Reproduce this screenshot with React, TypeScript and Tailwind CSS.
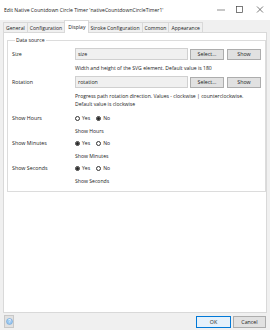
const font = { fontFamily: '"Open Sans", "Noto Sans", sans-serif' };

const Radio = ({ checked, label }: { checked: boolean; label: string }) => (
  <span className="flex items-center gap-[2px]">
    <span className="w-[5px] h-[5px] rounded-full border-[0.5px] border-[#333] flex items-center justify-center bg-white">
      {checked && <span className="w-[3px] h-[3px] rounded-full bg-[#222]" />}
    </span>
    <span>{label}</span>
  </span>
);

const Btn = ({ label, w }: { label: string; w: string }) => (
  <div className={`${w} h-[11px] bg-[#e1e1e1] border border-[#adadad] flex items-center justify-center`}>{label}</div>
);

const tabs = ['General', 'Configuration', 'Display', 'Stroke Configuration', 'Common', 'Appearance'];

export default function App() {
  return (
    <div style={font} className="w-[270px] h-[330px] bg-[#f0f0f0] flex flex-col text-[5.3px] leading-[8px] text-[#222] overflow-hidden">
      {/* title bar */}
      <div className="h-[20px] bg-white flex items-center pl-[4px] shrink-0">
        <span className="flex-1 text-[5.1px] whitespace-nowrap">Edit Native Countdown Circle Timer 'nativeCountdownCircleTimer1'</span>
        <svg width="48" height="10" viewBox="0 0 48 10" className="mr-[5px]">
          <line x1="0" y1="5" x2="8" y2="5" stroke="#444" strokeWidth="0.6" />
          <rect x="19.5" y="1.5" width="6" height="6" fill="none" stroke="#444" strokeWidth="0.7" />
          <path d="M40 1.5 L46 7.5 M46 1.5 L40 7.5" stroke="#444" strokeWidth="0.7" />
        </svg>
      </div>

      {/* tabs */}
      <div className="flex items-end pl-[3px] h-[13px] shrink-0 text-[5.1px]">
        {tabs.map((t) =>
          t === 'Display' ? (
            <div key={t} className="h-[13px] px-[3px] bg-white border border-b-0 border-[#d9d9d9] -mx-[1px] relative z-10 flex items-center">
              {t}
            </div>
          ) : (
            <div key={t} className="h-[11px] px-[2px] bg-[#f0f0f0] border border-b-0 border-[#d9d9d9] -ml-[1px] first:ml-0 flex items-center">
              {t}
            </div>
          )
        )}
      </div>

      {/* panel */}
      <div className="mx-[3px] flex-1 bg-white border border-[#d9d9d9] -mt-[1px] pt-[3px] px-[3px]">
        <fieldset className="border border-[#dcdcdc] px-[4px] pb-[4px]">
          <legend className="ml-[3px] px-[1px] text-[5.1px]">Data source</legend>
          <div className="flex flex-col">
            <div className="flex h-[12px] items-center mt-[4px]">
              <span className="w-[63px]">Size</span>
              <div className="w-[113px] h-[12px] bg-[#f0f0f0] border border-[#d0d0d0] flex items-center pl-[2px]">size</div>
              <div className="flex ml-[2px] gap-[3px]">
                <Btn label="Select..." w="w-[34px]" />
                <Btn label="Show" w="w-[34px]" />
              </div>
            </div>
            <div className="h-[16px] flex items-center pl-[63px] text-[5.1px] whitespace-nowrap">Width and height of the SVG element. Default value is 180</div>
            <div className="flex h-[12px] items-center">
              <span className="w-[63px]">Rotation</span>
              <div className="w-[113px] h-[12px] bg-[#f0f0f0] border border-[#d0d0d0] flex items-center pl-[2px]">rotation</div>
              <div className="flex ml-[2px] gap-[3px]">
                <Btn label="Select..." w="w-[34px]" />
                <Btn label="Show" w="w-[34px]" />
              </div>
            </div>
            <div className="pl-[63px] pt-[4px] pb-[4px] text-[5.1px] whitespace-nowrap">
              <div>Progress path rotation direction. Values - clockwise | counterclockwise.</div>
              <div>Default value is clockwise</div>
            </div>
            {[
              ['Show Hours', false],
              ['Show Minutes', true],
              ['Show Seconds', true],
            ].map(([label, yes]) => (
              <div key={label as string} className="flex flex-col">
                <div className="flex h-[12px] items-center">
                  <span className="w-[63px]">{label}</span>
                  <div className="flex gap-[6px] text-[5.1px]">
                    <Radio checked={yes as boolean} label="Yes" />
                    <Radio checked={!yes} label="No" />
                  </div>
                </div>
                <div className="h-[13px] flex items-center pl-[63px] text-[5.1px]">{label}</div>
              </div>
            ))}
          </div>
        </fieldset>
      </div>

      {/* bottom bar */}
      <div className="h-[17px] flex items-center px-[4px] shrink-0">
        <div className="w-[10px] h-[13px] bg-[#e1e1e1] border border-[#c8c8c8] flex items-center justify-center">
          <svg width="7" height="7" viewBox="0 0 7 7">
            <circle cx="3.5" cy="3.5" r="3" fill="#9cc8f0" stroke="#5b9bd5" strokeWidth="0.5" />
            <text x="3.5" y="5.3" fontSize="5" textAnchor="middle" fill="#fff" fontFamily="Liberation Sans, sans-serif">?</text>
          </svg>
        </div>
        <div className="flex-1" />
        <div className="w-[35px] h-[12px] bg-[#e5f1fb] border border-[#0078d7] flex items-center justify-center">OK</div>
        <div className="w-[33px] h-[12px] ml-[2px] bg-[#e1e1e1] border border-[#adadad] flex items-center justify-center">Cancel</div>
      </div>
    </div>
  );
}
